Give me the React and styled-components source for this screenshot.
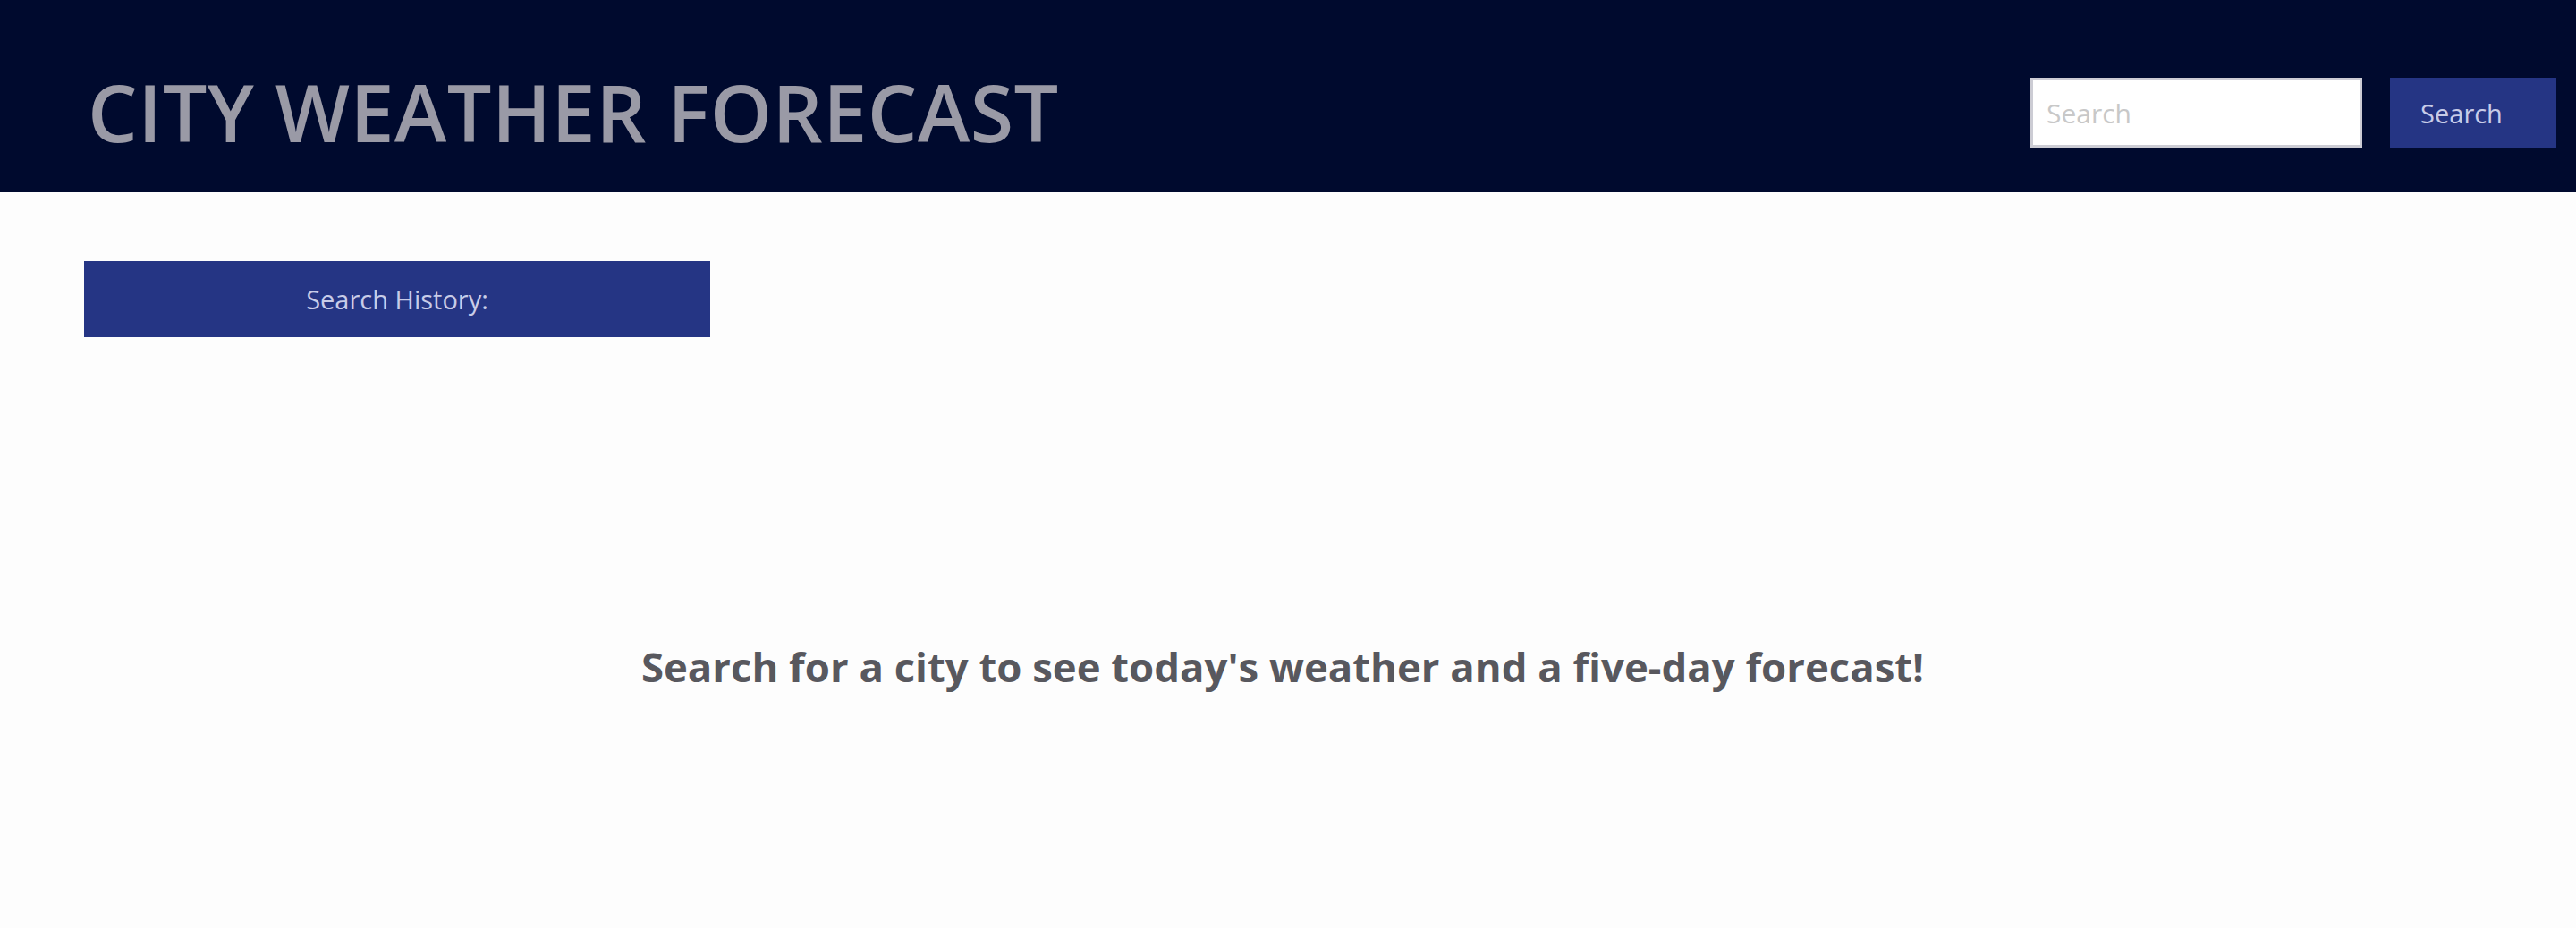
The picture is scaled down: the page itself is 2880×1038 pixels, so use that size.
import styled, { createGlobalStyle } from "styled-components"

const GlobalStyle = createGlobalStyle`
    body {
        margin: 0;
        background: #fdfdfd;
        font-family: "Trebuchet MS", "Open Sans", sans-serif;
    }
`

const App = () => {
    return(
        <>
            <GlobalStyle />
            <Header>
                <Title>CITY WEATHER FORECAST</Title>
                <SearchForm onSubmit={e => e.preventDefault()}>
                    <SearchInput placeholder="Search" />
                    <SearchButton type="submit">Search</SearchButton>
                </SearchForm>
            </Header>
            <Main>
                <History>
                    <HistoryTitle>Search History:</HistoryTitle>
                </History>
                <Message>Search for a city to see today's weather and a five-day forecast!</Message>
            </Main>
        </>
    )
}

const Header = styled.header`
    height: 215px;
    background: #000a2e;
    display: flex;
    justify-content: space-between;
    align-items: flex-start;
    padding: 0 22px 0 98px;
    box-sizing: border-box;
`

const Title = styled.h1`
    margin: 81px 0 0;
    color: #9a9aa6;
    font-size: 88px;
    font-weight: 600;
    letter-spacing: 0.5px;
    line-height: 1;
`

const SearchForm = styled.form`
    display: flex;
    gap: 31px;
    margin-top: 87px;
`

const SearchInput = styled.input`
    width: 371px;
    height: 78px;
    box-sizing: border-box;
    border: 3px solid #ccccd4;
    background: #fff;
    padding: 0 15px;
    font-family: inherit;
    font-size: 30px;
    outline: none;

    &::placeholder {
        color: #c8c8c8;
    }
`

const SearchButton = styled.button`
    width: 186px;
    height: 78px;
    border: none;
    background: #253584;
    color: #c8cce8;
    font-family: inherit;
    font-size: 29px;
    padding: 0 26px 0 0;
`

const Main = styled.main`
    padding: 77px 94px 0;
`

const History = styled.aside`
    width: 700px;
`

const HistoryTitle = styled.div`
    height: 85px;
    background: #253584;
    color: #c8cce8;
    font-size: 29px;
    display: flex;
    align-items: center;
    justify-content: center;
`

const Message = styled.h2`
    margin: 337px 0 0;
    padding-right: 12px;
    text-align: center;
    color: #58585e;
    font-size: 45.5px;
    font-weight: 700;
`

export default App
